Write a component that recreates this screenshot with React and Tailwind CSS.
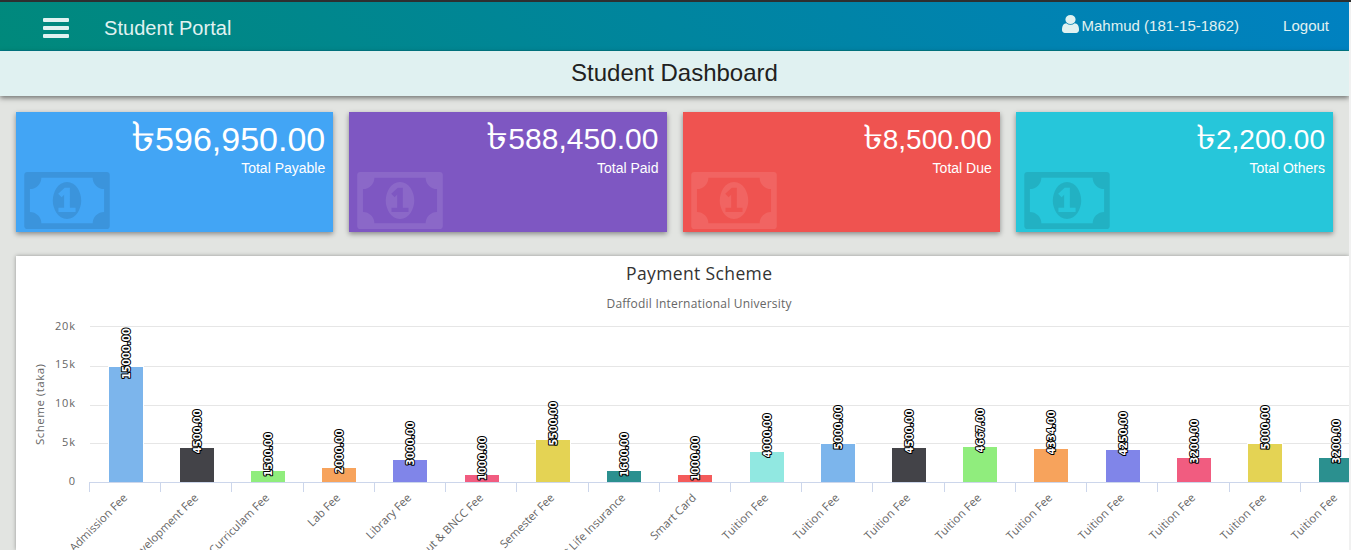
import React from "react";

const MONEY =
  "M768 1152h384v-96h-128v-448h-114l-148 137 77 80q42-37 55-57h2v288h-128v96zm512-256q0 70-21 142t-59.5 134-101.5 101-138 39-138-39-101.5-101-59.5-134-21-142 21-142 59.5-134 101.5-101 138-39 138 39 101.5 101 59.5 134 21 142zm512 256v-512q-106 0-181-75t-75-181h-1152q0 106-75 181t-181 75v512q106 0 181 75t75 181h1152q0-106 75-181t181-75zm128-832v1152q0 26-19 45t-45 19h-1792q-26 0-45-19t-19-45v-1152q0-26 19-45t45-19h1792q26 0 45 19t19 45z";
const USER =
  "M1536 1399q0 109-62.5 187t-150.5 78h-854q-88 0-150.5-78t-62.5-187q0-85 8.5-160.5t31.5-152 58.5-131 94-89 134.5-34.5q131 128 313 128t313-128q76 0 134.5 34.5t94 89 58.5 131 31.5 152 8.5 160.5zm-256-887q0 159-112.5 271.5t-271.5 112.5-271.5-112.5-112.5-271.5 112.5-271.5 271.5-112.5 271.5 112.5 112.5 271.5z";

const cards = [
  { amount: "596,950.00", label: "Total Payable", bg: "bg-[#42a5f5]", size: "text-[34px]", icon: "text-black/10" },
  { amount: "588,450.00", label: "Total Paid", bg: "bg-[#7e57c2]", size: "text-[30px]", icon: "text-white/10" },
  { amount: "8,500.00", label: "Total Due", bg: "bg-[#ef5350]", size: "text-[28px]", icon: "text-white/10" },
  { amount: "2,200.00", label: "Total Others", bg: "bg-[#26c6da]", size: "text-[28px]", icon: "text-black/10" },
];

// name, bar left edge, bar top edge, value, colour
const bars = [
  ["Admission Fee", 109, 367, "15000.00", "#7cb5ec"],
  ["Development Fee", 180, 448, "4500.00", "#434348"],
  ["Extra Curriculam Fee", 251, 471, "1500.00", "#90ed7d"],
  ["Lab Fee", 322, 468, "2000.00", "#f7a35c"],
  ["Library Fee", 393, 460, "3000.00", "#8085e9"],
  ["Rover Scout & BNCC Fee", 465, 475, "1000.00", "#f15c80"],
  ["Semester Fee", 536, 440, "5500.00", "#e4d354"],
  ["Student Life Insurance", 607, 471, "1600.00", "#2b908f"],
  ["Smart Card", 678, 475, "1000.00", "#f45b5b"],
  ["Tuition Fee", 750, 452, "4000.00", "#91e8e1"],
  ["Tuition Fee", 821, 444, "5000.00", "#7cb5ec"],
  ["Tuition Fee", 892, 448, "4500.00", "#434348"],
  ["Tuition Fee", 963, 447, "4667.00", "#90ed7d"],
  ["Tuition Fee", 1034, 449, "4334.00", "#f7a35c"],
  ["Tuition Fee", 1106, 450, "4250.00", "#8085e9"],
  ["Tuition Fee", 1177, 458, "3200.00", "#f15c80"],
  ["Tuition Fee", 1248, 444, "5000.00", "#e4d354"],
  ["Tuition Fee", 1319, 458, "3200.00", "#2b908f"],
];
const ticks = [89, 160, 231, 303, 374, 445, 516, 588, 659, 730, 801, 872, 944, 1015, 1086, 1157, 1229, 1300];
const yLabels = [["20k", 330, 20], ["15k", 368, 20], ["10k", 407, 20], ["5k", 446, 13], ["0", 485, 6.5]];

function Chart() {
  return (
    <svg
      className="block h-[294px] w-[1333px] font-['Open_Sans',sans-serif]"
      viewBox="16 256 1333 294"
    >
      <text x="699" y="280" textAnchor="middle" fontSize="17.5" fill="#333333" textLength="146">Payment Scheme</text>
      <text x="699" y="308" textAnchor="middle" fontSize="12" fill="#666666" textLength="185">Daffodil International University</text>
      <text transform="translate(44 404.5) rotate(-90)" textAnchor="middle" fontSize="11.5" fill="#666666" textLength="81">Scheme (taka)</text>
      {[326, 366, 405, 443].map((y) => (
        <rect key={y} x="90" y={y} width="1259" height="1" fill="#e6e6e6" />
      ))}
      {bars.map(([, x, y, , color]) => (
        <g key={x}>
          <rect x={x - 1} y={y - 1} width="36" height={483 - y} fill="#ffffff" />
          <rect x={x} y={y} width="34" height={482 - y} fill={color} />
        </g>
      ))}
      <rect x="89" y="482" width="1260" height="1" fill="#ccd6eb" />
      {ticks.map((x) => (
        <rect key={x} x={x} y="482" width="1" height="10" fill="#ccd6eb" />
      ))}
      {yLabels.map(([t, y, w]) => (
        <text key={t} x="75" y={y} textAnchor="end" fontSize="11" fill="#666666" textLength={w}>{t}</text>
      ))}
      {bars.map(([name, x, y, value]) => (
        <g key={x}>
          <text
            transform={`translate(${x + 19} 498.5) rotate(-45)`}
            textAnchor="end"
            fontSize="11.3"
            fill="#666666"
            textLength={name === "Tuition Fee" ? 59.5 : undefined}
          >
            {name}
          </text>
          <text
            className="font-['DejaVu_Sans',sans-serif]"
            transform={`translate(${x + 20.5} ${value.length === 8 ? y + 12 : y + 5.5}) rotate(-90)`}
            fontSize="9.7"
            fontWeight="700"
            fill="#ffffff"
            stroke="#000000"
            strokeWidth="2"
            strokeLinejoin="round"
            paintOrder="stroke"
            textLength={value.length === 8 ? 51 : 44}
          >
            {value}
          </text>
        </g>
      ))}
    </svg>
  );
}

export default function App() {
  return (
    <div className="flex h-[550px] w-[1351px] flex-col overflow-hidden bg-[#f1f1f1] font-['Liberation_Sans',Arial,sans-serif]">
      <div className="h-[2px] shrink-0 bg-[#2d2f30]" />
      <div className="flex h-[548px] w-[1349px] flex-col overflow-hidden bg-[#e2e4e1]">
        <header className="flex h-[49px] shrink-0 items-center border-b border-[#007c88] bg-[linear-gradient(45deg,#00897b,#0081c2)] pr-5 pl-[43px] text-[#e0f2f1]">
          <div className="mt-[3px] flex w-[26px] flex-col gap-1">
            <span className="h-1 rounded-[1px] bg-[#e0f2f1]" />
            <span className="h-1 rounded-[1px] bg-[#e0f2f1]" />
            <span className="h-1 rounded-[1px] bg-[#e0f2f1]" />
          </div>
          <h1 className="mt-[3px] ml-[35px] text-[20px] leading-6 tracking-[0.05px]">Student Portal</h1>
          <div className="ml-auto flex items-center text-[15px] leading-5">
            <svg className="mr-[3px] mb-[5px] h-[18px] w-[17px]" viewBox="256 128 1280 1536" preserveAspectRatio="none" fill="currentColor">
              <path d={USER} />
            </svg>
            <span>Mahmud (181-15-1862)</span>
            <span className="ml-[44px]">Logout</span>
          </div>
        </header>
        <div className="flex h-[45px] shrink-0 items-center justify-center bg-[#e0f1f1] pb-[2px] text-[24px] text-[#212121] shadow-[0_2px_5px_rgba(0,0,0,0.5)]">
          Student Dashboard
        </div>
        <main className="flex flex-col gap-6 pt-4 pl-4">
          <div className="grid grid-cols-4 gap-4 pr-4">
            {cards.map((c) => (
              <section
                key={c.label}
                className={`flex h-[120px] justify-between px-2 text-white shadow-[0_2px_5px_rgba(0,0,0,0.4)] ${c.bg}`}
              >
                <svg className={`mb-[3px] h-[57px] w-[86px] self-end ${c.icon}`} viewBox="0 256 1920 1280" fill="currentColor">
                  <path d={MONEY} />
                </svg>
                <div className="flex flex-col items-end">
                  <div className={`mt-[5px] mb-[3px] flex h-10 items-baseline leading-10 ${c.size}`}>
                    <span className="inline-block origin-right scale-x-[1.2] text-[1.22em]">৳</span>
                    <span>{c.amount}</span>
                  </div>
                  <div className="text-[14px] leading-4">{c.label}</div>
                </div>
              </section>
            ))}
          </div>
          <div className="h-[294px] w-[1333px] bg-white shadow-[0_0_4px_rgba(0,0,0,0.35)]">
            <Chart />
          </div>
        </main>
      </div>
    </div>
  );
}
